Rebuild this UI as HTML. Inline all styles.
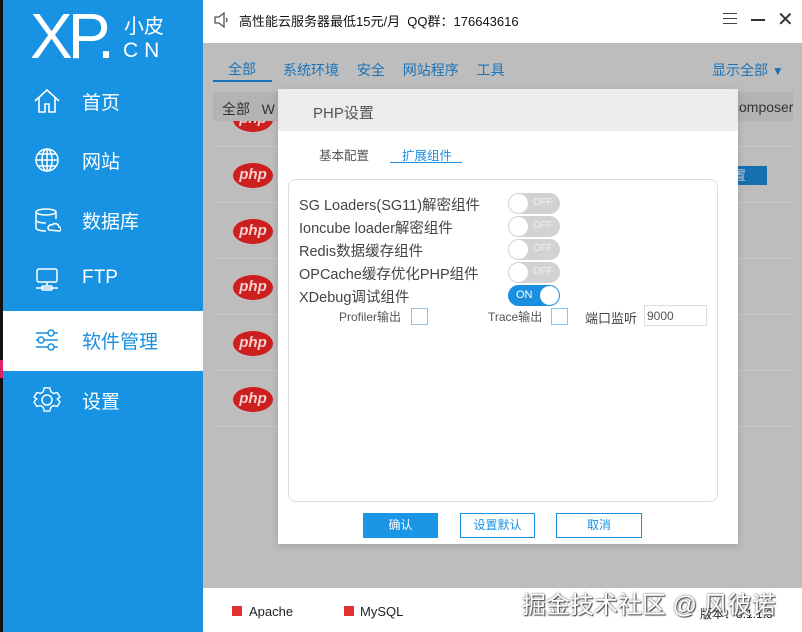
<!DOCTYPE html>
<html><head><meta charset="utf-8"><style>
*{margin:0;padding:0;box-sizing:border-box}
body{width:802px;height:632px;overflow:hidden;position:relative;background:#bdbdbd;font-family:"Liberation Sans","Noto Sans CJK SC",sans-serif}
.a{position:absolute}
.side{left:3px;top:0;width:200px;height:632px;background:#1893e3}
.edge{left:0;top:0;width:3px;height:632px;background:#111}
.nav{left:3px;width:200px;height:60px;color:#fff;font-size:19px}
.nav span{position:absolute;left:79px;top:16px}
.nav svg{position:absolute;left:30px;top:15px}
.php{width:40px;height:25px;border-radius:50%;background:#cc1f1f;color:#f4d0d0;font-style:italic;font-weight:bold;font-size:15px;text-align:center;line-height:24px;font-family:"Liberation Sans",sans-serif}
.tog{width:52px;height:21px;border-radius:11px;background:#d2d2d2;left:508px}
.tog i{position:absolute;left:1px;top:1px;width:19px;height:19px;border-radius:50%;background:#fff}
.tog b{position:absolute;left:25px;top:4px;font-size:10px;color:#f2f2f2;font-weight:normal}
.lbl{left:299px;font-size:14.5px;color:#444}
.btn{top:513px;height:25px;width:75px;font-size:12px;text-align:center;line-height:23px;border:1px solid #1a8fe0;color:#1a8fe0;background:#fff}
</style></head><body>
<div class="a edge"></div>
<div class="a" style="left:0;top:360px;width:3px;height:18px;background:#e0206a"></div>
<div class="a side"></div>
<div class="a" style="left:30px;top:4px;color:#fff;font-size:64px;line-height:64px;letter-spacing:-5px">XP.</div>
<div class="a" style="left:124px;top:10px;color:#fff;font-size:20px">小皮</div>
<div class="a" style="left:123px;top:39px;color:#fff;font-size:21px;letter-spacing:6px">CN</div>
<div class="a nav" style="top:72px"><svg width="28" height="28" viewBox="0 0 28 28" fill="none" stroke="#fff" stroke-width="1.6"><path d="M2 14 L14 3 L26 14 M6 11 V25 H12 V17 H16 V25 H22 V11"/></svg><span>首页</span></div>
<div class="a nav" style="top:131px"><svg width="28" height="28" viewBox="0 0 28 28" fill="none" stroke="#fff" stroke-width="1.5"><circle cx="14" cy="14" r="11"/><ellipse cx="14" cy="14" rx="5" ry="11"/><path d="M3 14H25M5 8H23M5 20H23M14 3V25"/></svg><span>网站</span></div>
<div class="a nav" style="top:191px"><svg width="28" height="28" viewBox="0 0 28 28" fill="none" stroke="#fff" stroke-width="1.5"><ellipse cx="13" cy="6" rx="10" ry="3"/><path d="M3 6V22C3 24 8 25 13 25M23 6V13M3 14C3 16 8 17 13 17"/><path d="M16 24a3 3 0 0 1 3-5 4 4 0 0 1 7 2 2 2 0 0 1 0 4z"/></svg><span>数据库</span></div>
<div class="a nav" style="top:251px"><svg width="28" height="28" viewBox="0 0 28 28" fill="none" stroke="#fff" stroke-width="1.5"><rect x="4" y="3" width="20" height="13" rx="2"/><path d="M14 16V20M3 22H25"/><rect x="9" y="20" width="10" height="4" rx="1"/></svg><span>FTP</span></div>
<div class="a nav" style="top:311px;background:#fff;color:#1a8fe0"><svg width="28" height="28" viewBox="0 0 28 28" fill="none" stroke="#1a8fe0" stroke-width="1.5"><path d="M3 7H25M3 14H25M3 21H25"/><circle cx="18" cy="7" r="3" fill="#fff"/><circle cx="8" cy="14" r="3" fill="#fff"/><circle cx="18" cy="21" r="3" fill="#fff"/></svg><span>软件管理</span></div>
<div class="a nav" style="top:371px"><svg width="28" height="28" viewBox="0 0 28 28" fill="none" stroke="#fff" stroke-width="1.5"><path d="M11 2H17L18 6L21 8L25 7L28 12L25 14L28 17L25 22L21 21L18 23L17 27H11L10 23L7 21L3 22L0 17L3 14L0 12L3 7L7 8L10 6Z" transform="translate(1 0) scale(.93)"/><circle cx="14" cy="14" r="5"/></svg><span>设置</span></div>

<div class="a" style="left:203px;top:0;width:599px;height:43px;background:#fff"></div>
<svg class="a" style="left:213px;top:11px" width="16" height="18" viewBox="0 0 16 18" fill="none" stroke="#555" stroke-width="1.3"><path d="M2 6H6L11 2V16L6 12H2Z"/><path d="M13 7Q15 9 13 11"/></svg>
<div class="a" style="left:239px;top:11px;font-size:13px;color:#111">高性能云服务器最低15元/月&nbsp;&nbsp;QQ群：176643616</div>
<div class="a" style="left:723px;top:13px;width:14px;height:1px;background:#444;box-shadow:0 5px 0 #444,0 10px 0 #444"></div>
<div class="a" style="left:751px;top:19px;width:14px;height:2px;background:#333"></div>
<div class="a" style="left:777px;top:7px;font-size:20px;color:#333">✕</div>

<div class="a" style="left:228px;top:59px;font-size:14px;color:#1a73b8">全部</div>
<div class="a" style="left:213px;top:80px;width:59px;height:2px;background:#1a73b8"></div>
<div class="a" style="left:283px;top:60px;font-size:14px;color:#1a73b8;word-spacing:14px">系统环境 安全 网站程序 工具</div>
<div class="a" style="left:712px;top:60px;font-size:14px;color:#1a73b8">显示全部 <span style="font-size:12px">▼</span></div>

<div class="a" style="left:213px;top:146px;width:580px;height:1px;background:#c8c8c8;box-shadow:0 56px 0 #c8c8c8,0 112px 0 #c8c8c8,0 168px 0 #c8c8c8,0 224px 0 #c8c8c8,0 280px 0 #c8c8c8"></div>
<div class="a php" style="left:233px;top:107px">php</div>
<div class="a" style="left:213px;top:92px;width:580px;height:29px;background:#b3b3b3"></div>
<div class="a" style="left:222px;top:99px;font-size:14px;color:#333">全部&nbsp;&nbsp;&nbsp;W</div>
<div class="a" style="left:732px;top:99px;font-size:14px;color:#333">composer</div>
<div class="a php" style="left:233px;top:163px">php</div>
<div class="a php" style="left:233px;top:219px">php</div>
<div class="a php" style="left:233px;top:275px">php</div>
<div class="a php" style="left:233px;top:331px">php</div>
<div class="a php" style="left:233px;top:387px">php</div>
<div class="a" style="left:720px;top:166px;width:47px;height:19px;background:#1570b0;color:#bcd;font-size:13px;line-height:19px">设置</div>

<div class="a" style="left:278px;top:89px;width:460px;height:455px;background:#fff;box-shadow:0 2px 8px rgba(0,0,0,.15)"></div>
<div class="a" style="left:278px;top:89px;width:460px;height:42px;background:#ececec"></div>
<div class="a" style="left:313px;top:102px;font-size:15px;color:#555">PHP设置</div>
<div class="a" style="left:319px;top:145px;font-size:12.5px;color:#555">基本配置</div>
<div class="a" style="left:402px;top:145px;font-size:12.5px;color:#1a8fe0">扩展组件</div>
<div class="a" style="left:390px;top:162px;width:72px;height:1px;background:#1a8fe0"></div>
<div class="a" style="left:288px;top:179px;width:430px;height:323px;border:1px solid #ddd;border-radius:8px"></div>
<div class="a lbl" style="top:194px">SG Loaders(SG11)解密组件</div>
<div class="a lbl" style="top:217px">Ioncube loader解密组件</div>
<div class="a lbl" style="top:240px">Redis数据缓存组件</div>
<div class="a lbl" style="top:263px">OPCache缓存优化PHP组件</div>
<div class="a lbl" style="top:286px">XDebug调试组件</div>
<div class="a tog" style="top:193px"><i></i><b>OFF</b></div>
<div class="a tog" style="top:216px"><i></i><b>OFF</b></div>
<div class="a tog" style="top:239px"><i></i><b>OFF</b></div>
<div class="a tog" style="top:262px"><i></i><b>OFF</b></div>
<div class="a tog" style="top:285px;background:#1a8fe0"><i style="left:32px"></i><b style="left:8px;top:4px;font-size:11px;color:#fff">ON</b></div>
<div class="a" style="left:339px;top:308px;font-size:12px;color:#555">Profiler输出</div>
<div class="a" style="left:411px;top:308px;width:17px;height:17px;border:1px solid #8cc4ea"></div>
<div class="a" style="left:488px;top:308px;font-size:12px;color:#555">Trace输出</div>
<div class="a" style="left:551px;top:308px;width:17px;height:17px;border:1px solid #8cc4ea"></div>
<div class="a" style="left:585px;top:308px;font-size:13px;color:#444">端口监听</div>
<div class="a" style="left:644px;top:305px;width:63px;height:21px;border:1px solid #ddd;font-size:12px;color:#555;padding:3px 2px">9000</div>
<div class="a btn" style="left:363px;background:#1a96e6;color:#fff;border-color:#1a96e6">确认</div>
<div class="a btn" style="left:460px">设置默认</div>
<div class="a btn" style="left:556px;width:86px">取消</div>

<div class="a" style="left:203px;top:588px;width:599px;height:44px;background:#fff"></div>
<div class="a" style="left:232px;top:606px;width:10px;height:10px;background:#e03030"></div>
<div class="a" style="left:249px;top:604px;font-size:13px;color:#222">Apache</div>
<div class="a" style="left:344px;top:606px;width:10px;height:10px;background:#e03030"></div>
<div class="a" style="left:360px;top:604px;font-size:13px;color:#222">MySQL</div>
<div class="a" style="left:700px;top:605px;font-size:12px;color:#222">版本：8.1.1.3</div>
<div class="a" style="left:522px;top:585px;font-size:24px;color:#fff;text-shadow:0 0 2px #555,1px 1px 1px #444">掘金技术社区 @ 风彼诺</div>
</body></html>
